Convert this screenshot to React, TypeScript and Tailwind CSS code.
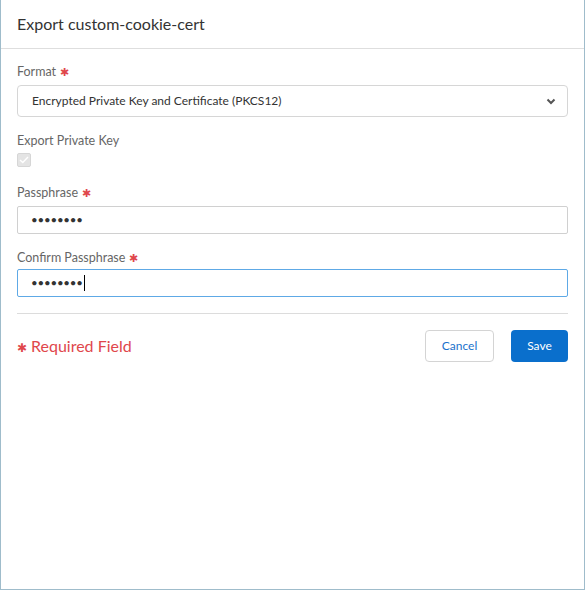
import React from "react";

function Req() {
  return <span className="ml-1 text-[11px] text-[#e0474c]">✱</span>;
}

function Label({ text, required }: { text: string; required?: boolean }) {
  return (
    <div className="text-[12.5px] leading-4 text-[#666]">
      {text}
      {required && <Req />}
    </div>
  );
}

export default function App() {
  return (
    <div
      className="w-[585px] h-[590px] bg-white border-x border-b border-[#9fbccb] flex flex-col"
      style={{ fontFamily: "Lato, 'Open Sans', sans-serif" }}
    >
      <div className="h-[49px] shrink-0 border-b border-[#dedede] px-4 flex items-center">
        <h1 className="text-[16px] text-[#333]">Export custom-cookie-cert</h1>
      </div>

      <div className="px-4 pt-[15px]">
        <Label text="Format" required />
        <div className="mt-[5px] h-8 rounded-[4px] border border-[#d6d6d6] flex items-center justify-between pl-[14px] pr-[11px]">
          <span className="text-[12px] text-[#333]">Encrypted Private Key and Certificate (PKCS12)</span>
          <svg width="10" height="7" viewBox="0 0 10 7">
            <path d="M1.5 1.5 L5 5 L8.5 1.5" fill="none" stroke="#555" strokeWidth="2" />
          </svg>
        </div>

        <div className="mt-4">
          <Label text="Export Private Key" />
        </div>
        <div className="mt-1 w-[14px] h-[14px] rounded-[2px] bg-[#e4e4e4] border border-[#d6d6d6] flex items-center justify-center">
          <svg width="10" height="8" viewBox="0 0 10 8">
            <path d="M1 4 L3.8 6.6 L9 1" fill="none" stroke="#fff" strokeWidth="1.4" />
          </svg>
        </div>

        <div className="mt-[18px]">
          <Label text="Passphrase" required />
        </div>
        <div className="mt-[5px] h-7 rounded-[2px] border border-[#d0d0d0] flex items-center pl-[13px]">
          <span className="text-[11.5px] tracking-[-0.2px] text-[#333]">••••••••</span>
        </div>

        <div className="mt-4">
          <Label text="Confirm Passphrase" required />
        </div>
        <div className="mt-[3px] h-7 rounded-[2px] border border-[#5ea9e6] flex items-center pl-[13px]">
          <span className="text-[11.5px] tracking-[-0.2px] text-[#333]">••••••••</span>
          <span className="ml-px w-px h-4 bg-black" />
        </div>

        <div className="mt-4 border-t border-[#dcdcdc]" />

        <div className="mt-4 flex items-center">
          <div className="flex-1 text-[16px] text-[#e0474c]">
            <span className="text-[12px] mr-1">✱</span>Required Field
          </div>
          <button className="h-8 w-[69px] rounded-[4px] border border-[#d4d4d4] bg-white text-[12px] text-[#1a72cc]">
            Cancel
          </button>
          <button className="ml-[17px] h-8 w-[57px] rounded-[4px] bg-[#0a6fcc] text-[12px] text-white">
            Save
          </button>
        </div>
      </div>
    </div>
  );
}
